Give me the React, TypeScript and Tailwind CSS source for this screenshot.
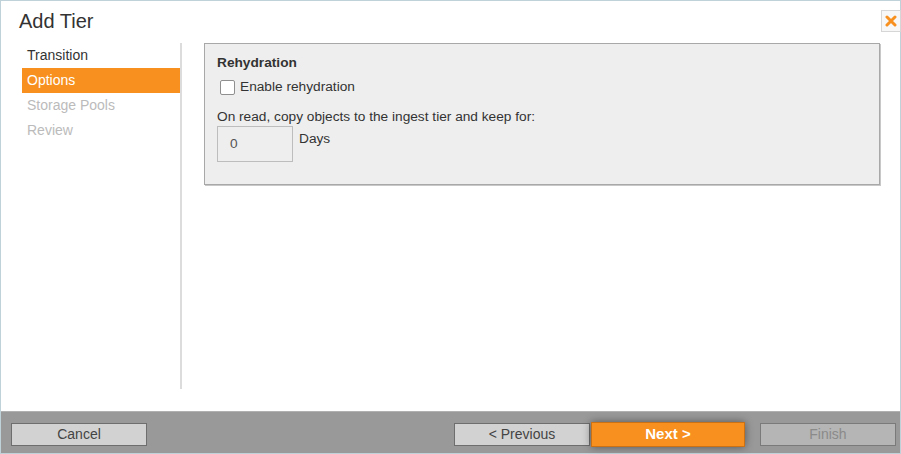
export default function App() {
  const steps = [
    { label: "Transition", state: "done" },
    { label: "Options", state: "active" },
    { label: "Storage Pools", state: "todo" },
    { label: "Review", state: "todo" },
  ];

  return (
    <div className="w-[901px] h-[454px] bg-white border border-[#bfd2da] flex flex-col font-['Liberation_Sans',Arial,sans-serif] text-[#333]">
      {/* header */}
      <div className="relative h-[42px] shrink-0">
        <h1 className="pl-[18px] pt-[7px] text-[20px] leading-[26px] text-[#333]">Add Tier</h1>
        <button className="absolute right-[-1px] top-[9px] w-[20px] h-[22px] border border-[#d6d6d6] bg-[#f7f7f7] flex items-center justify-center">
          <svg width="12" height="12" viewBox="0 0 12 12">
            <path d="M2 2 L10 10 M10 2 L2 10" stroke="#f7901e" strokeWidth="3" strokeLinecap="round" />
          </svg>
        </button>
      </div>

      {/* body */}
      <div className="flex flex-1 pb-[22px]">
        <div className="w-[181px] shrink-0 pl-[21px] border-r-2 border-[#dcdcdc]">
          {steps.map((s) => (
            <div
              key={s.label}
              className={
                s.state === "active"
                  ? "h-[25px] pl-[5px] flex items-center text-[14px] bg-[#f7901e] text-white"
                  : s.state === "done"
                  ? "h-[25px] pl-[5px] flex items-center text-[14px] text-[#333]"
                  : "h-[25px] pl-[5px] flex items-center text-[14px] text-[#bbbbbb]"
              }
            >
              {s.label}
            </div>
          ))}
        </div>

        <div className="flex-1 pl-[22px] pr-[20px]">
          <div className="h-[142px] bg-[#eeeeee] border border-[#a8a8a8] shadow-[1px_1px_0_#c8c8c8] pl-[12px] pt-[10px] text-[13.7px]">
            <div className="font-bold leading-[18px] text-[#333]">Rehydration</div>
            <label className="flex items-center mt-[6px] ml-[3px] gap-[5px] leading-[18px]">
              <span className="w-[15px] h-[15px] bg-white border border-[#8f8f8f] rounded-[2px] inline-block" />
              <span>Enable rehydration</span>
            </label>
            <div className="mt-[12px] leading-[18px]">On read, copy objects to the ingest tier and keep for:</div>
            <div className="flex items-start gap-[6px]">
              <div className="w-[76px] h-[36px] border border-[#bdbdbd] bg-[#eeeeee] pl-[12px] flex items-center text-[#555]">0</div>
              <div className="leading-[18px] pt-[4px]">Days</div>
            </div>
          </div>
        </div>
      </div>

      {/* footer */}
      <div className="h-[42px] shrink-0 bg-[#999999] border-t border-[#b0b0b0] flex items-start pt-[11px] pl-[10px] pr-[4px]">
        <button className="w-[136px] h-[23px] bg-[#d2d2d2] border border-[#6e6e6e] text-[14px] text-[#444]">Cancel</button>
        <div className="flex-1" />
        <button className="w-[136px] h-[23px] bg-[#d2d2d2] border border-[#6e6e6e] text-[14px] text-[#444]">&lt; Previous</button>
        <button className="ml-[1px] -mt-[1px] w-[154px] h-[25px] bg-[#f7901e] border border-[#c97114] text-[15px] font-bold text-white shadow-[0_0_8px_rgba(0,0,0,0.45)]">Next &gt;</button>
        <div className="w-[15px]" />
        <button className="w-[136px] h-[23px] bg-[#b5b5b5] border border-[#7a7a7a] text-[14px] text-[#8a8a8a]">Finish</button>
      </div>
    </div>
  );
}
